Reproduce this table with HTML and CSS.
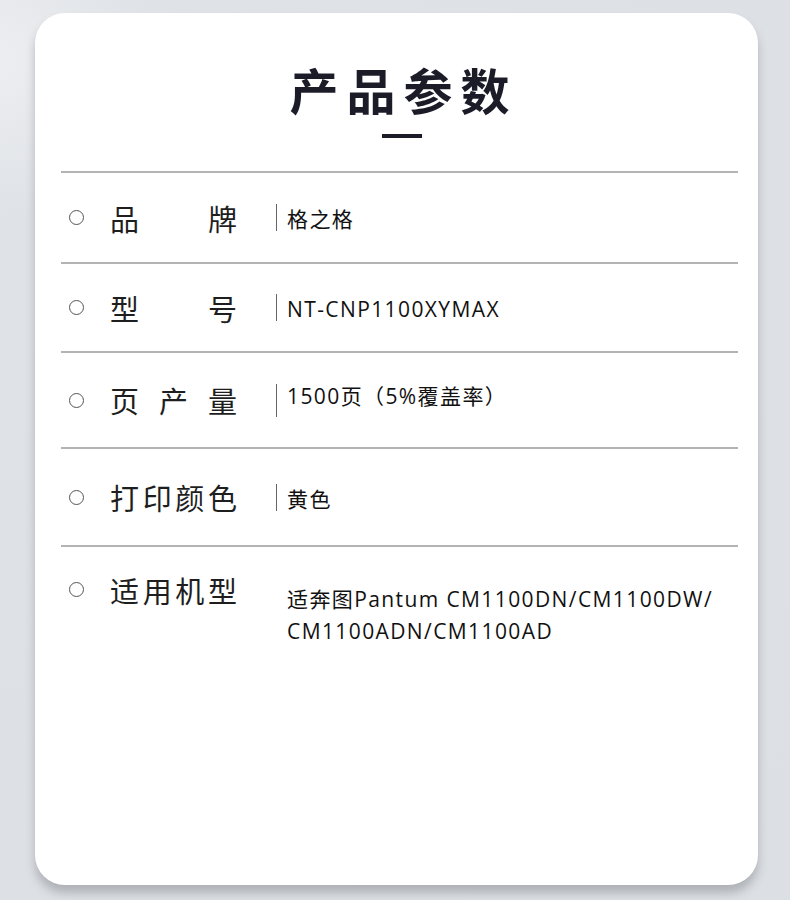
FILE: index.html
```html
<!DOCTYPE html>
<html lang="zh-CN">

<head>
    <meta charset="UTF-8" />
    <meta name="viewport" content="width=device-width, initial-scale=1.0" />
    <title>产品参数</title>
    <link rel="stylesheet" href="styles.css">
</head>

<body>
    <div class="tarjeta">
        <h1>产品参数</h1>
        <div class="raya"></div>
        <div class="tabla">
            <div class="fila f1">
                <span class="punto"></span>
                <span class="nombre">品牌</span>
                <span class="valor">格之格</span>
            </div>
            <div class="fila f2">
                <span class="punto"></span>
                <span class="nombre">型号</span>
                <span class="valor">NT-CNP1100XYMAX</span>
            </div>
            <div class="fila f3">
                <span class="punto"></span>
                <span class="nombre">页产量</span>
                <span class="valor">1500页（5%覆盖率）</span>
            </div>
            <div class="fila f4">
                <span class="punto"></span>
                <span class="nombre">打印颜色</span>
                <span class="valor">黄色</span>
            </div>
            <div class="fila ultima">
                <span class="punto"></span>
                <span class="nombre">适用机型</span>
                <span class="valor sin-barra">适奔图Pantum CM1100DN/CM1100DW/<br>CM1100ADN/CM1100AD</span>
            </div>
        </div>
    </div>
</body>

</html>
```

FILE: styles.css
```css
* {
    box-sizing: border-box;
    margin: 0;
    padding: 0;
}

body {
    width: 790px;
    height: 900px;
    overflow: hidden;
    background: radial-gradient(circle at 0 60px, #eceef1 0, #dfe2e6 160px, #dcdfe3 100%);
    font-family: "Noto Sans CJK SC", "Noto Sans", sans-serif;
    padding-top: 13px;
}

.tarjeta {
    margin-left: 35px;
    width: 723px;
    height: 872px;
    background-color: white;
    border-radius: 30px;
    box-shadow: 0 8px 10px rgba(120, 124, 130, 0.45);
    padding: 48px 20px 0 26px;
}

h1 {
    text-align: center;
    font-size: 49px;
    font-weight: 700;
    letter-spacing: 8px;
    padding-left: 8px;
    line-height: 56px;
    color: #1c1c28;
}

.raya {
    width: 40px;
    height: 4px;
    background-color: #1c1c28;
    margin: 17px auto 0 auto;
    position: relative;
    left: 2px;
}

.tabla {
    margin-top: 33px;
    border-top: 2px solid #b3b3b3;
}

.fila {
    display: flex;
    align-items: center;
    border-bottom: 2px solid #b3b3b3;
    height: 91px;
}

.f2 {
    height: 89px;
}

.f3 {
    height: 96px;
}

.f4 {
    height: 98px;
}

.ultima {
    border-bottom: none;
    align-items: flex-start;
    padding-top: 26px;
}

.punto {
    width: 15px;
    height: 15px;
    border: 1.5px solid #555;
    border-radius: 50%;
    margin-left: 8px;
    flex-shrink: 0;
}

.ultima .punto {
    margin-top: 9px;
}

.nombre {
    width: 127px;
    margin-left: 26px;
    font-size: 29px;
    font-weight: 400;
    line-height: 34px;
    color: #1e1e1e;
    text-align: justify;
    text-align-last: justify;
    flex-shrink: 0;
}

.valor {
    margin-left: 39px;
    border-left: 1.5px solid #666;
    padding-left: 10px;
    padding-top: 3px;
    font-family: "Open Sans", "Noto Sans CJK SC", sans-serif;
    font-size: 21px;
    letter-spacing: 1.4px;
    line-height: 24px;
    color: #111;
}

.f3 .valor {
    line-height: 25px;
    padding-bottom: 8px;
    padding-top: 0;
}

.sin-barra {
    border-left: none;
    margin-left: 40px;
    padding-top: 10px;
    line-height: 32px;
}
```
